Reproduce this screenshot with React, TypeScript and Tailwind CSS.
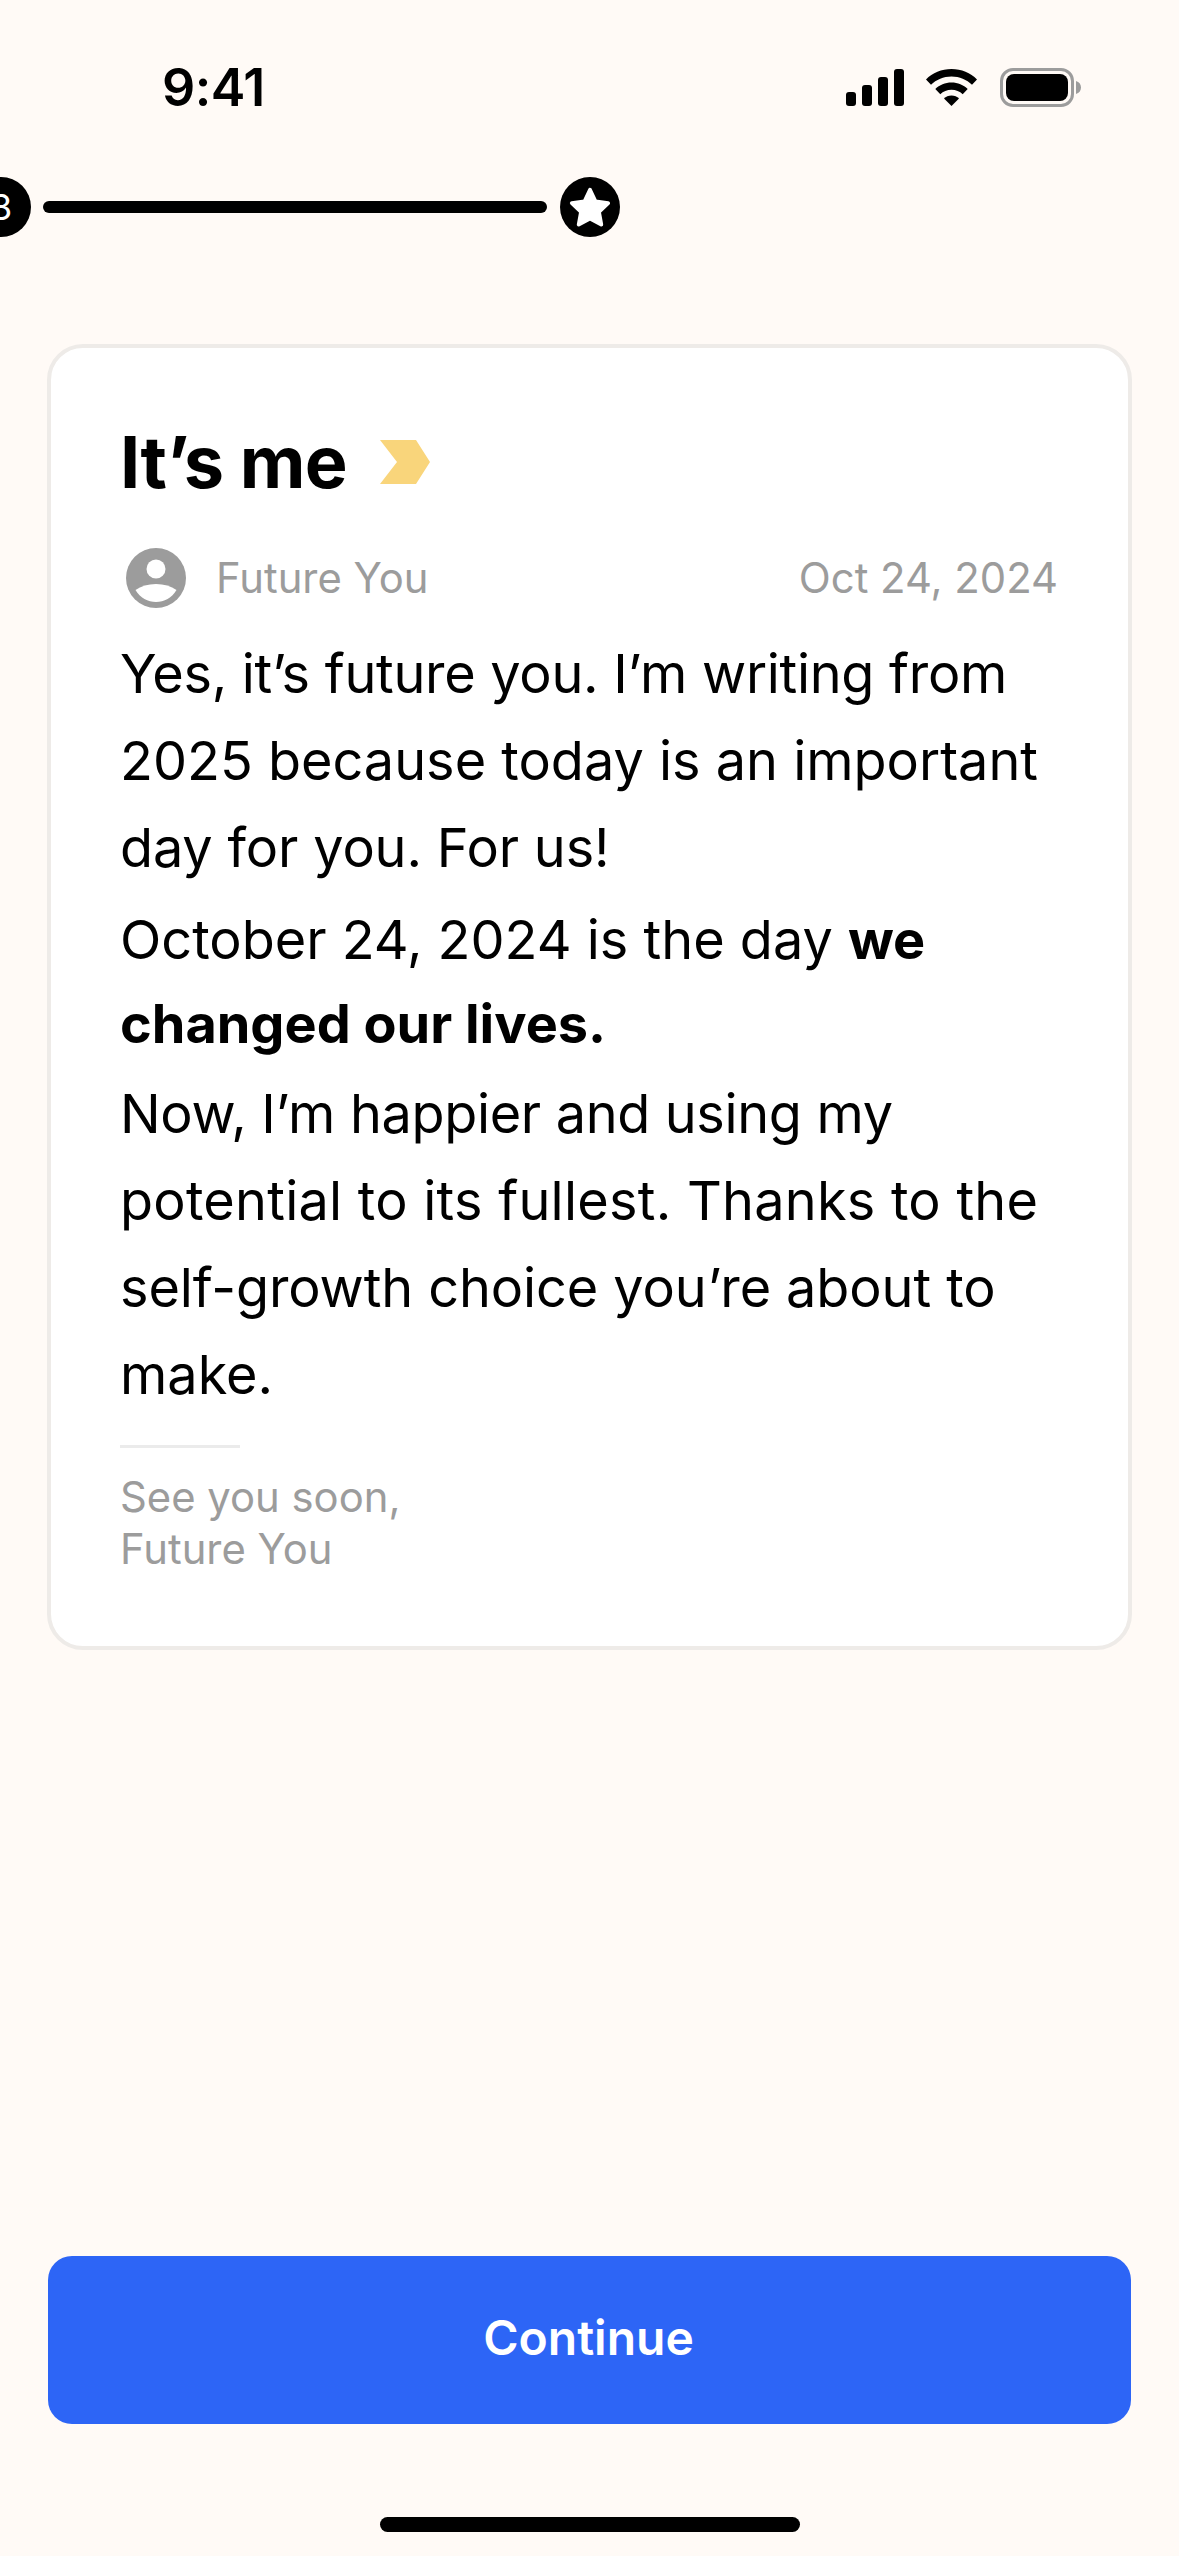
export default function App() {
  return (
    <div className="w-[1179px] h-[2556px] bg-[#fffaf6] overflow-hidden flex flex-col text-black" style={{ fontFamily: "Inter, 'Liberation Sans', sans-serif" }}>
      <div className="h-[177px] shrink-0 flex justify-between items-start pt-[61px] pl-[162px] pr-[98px]">
        <span className="text-[52px] leading-[54px] font-semibold tracking-[-0.5px]">9:41</span>
        <div className="flex items-start gap-[22px] pt-[8px]">
          <svg width="58" height="37" viewBox="0 0 58 37" fill="#000">
            <rect x="0" y="23" width="10" height="14" rx="3" />
            <rect x="16" y="16" width="10" height="21" rx="3" />
            <rect x="32" y="8" width="10" height="29" rx="3" />
            <rect x="48" y="0" width="10" height="37" rx="3" />
          </svg>
          <svg width="51" height="37" viewBox="0 0 51 37" fill="#000">
            <path d="M25.5 0C35.5 0 44.4 4 51 10.4L46 15.7C40.7 10.6 33.5 7.4 25.5 7.4S10.300 10.600 5 15.700L0 10.400C6.600 4 15.500 0 25.500 0Z" />
            <path d="M25.500 13.500C31.800 13.500 37.500 16 41.700 20L36.700 25.300C33.800 22.500 29.800 20.800 25.500 20.800S17.200 22.500 14.300 25.300L9.300 20C13.500 16 19.200 13.500 25.500 13.500Z" />
            <path d="M25.500 26.500C28.500 26.500 31.100 27.700 33 29.500L25.500 37L18 29.500C19.900 27.700 22.500 26.500 25.500 26.500Z" />
          </svg>
          <div className="flex items-center -mt-[1px] ml-[1px]">
            <div className="w-[74px] h-[39px] rounded-[13px] border-[3px] border-[#9c9c9c] p-[3px]">
              <div className="w-full h-full bg-black rounded-[8px]" />
            </div>
            <svg width="5" height="13" viewBox="0 0 5 13" className="ml-[2px]" fill="#9c9c9c">
              <path d="M0 0C3 1 5 3 5 6.500S3 12 0 13Z" />
            </svg>
          </div>
        </div>
      </div>

      <div className="flex items-center h-[60px] shrink-0 -ml-[29px]">
        <div className="w-[60px] h-[60px] rounded-full bg-black text-white flex items-center justify-center text-[36px] font-normal">3</div>
        <div className="w-[504px] h-[12px] rounded-full bg-black ml-[12px]" />
        <div className="w-[60px] h-[60px] rounded-full bg-black ml-[13px] flex items-center justify-center">
          <svg width="46" height="44" viewBox="0 0 24 23" fill="#fff" stroke="#fff" strokeWidth="2" strokeLinejoin="round">
            <path d="M12 2.500 L14.900 8.600 L21.500 9.500 L16.700 14.100 L17.900 20.700 L12 17.500 L6.100 20.700 L7.300 14.100 L2.500 9.500 L9.100 8.600 Z" />
          </svg>
        </div>
      </div>

      <div className="mx-[47px] mt-[107px] h-[1306px] rounded-[36px] border-[4px] border-[#eeebe8] bg-white pl-[69px] pr-[70px] pt-[61px]">
        <div className="flex items-center h-[106px]">
          <span className="text-[72px] leading-[106px] font-bold tracking-[-0.7px]">It’s me</span>
          <svg width="50" height="44" viewBox="0 0 50 44" className="ml-[33px]" fill="#f9d57b">
            <path d="M0 0H36L50 22L36 44H0L17 22Z" />
          </svg>
        </div>
        <div className="flex items-center justify-between mt-[33px] h-[60px] text-[#9c9c9c] text-[41.8px] leading-[60px]">
          <div className="flex items-center">
            <svg width="60" height="60" viewBox="0 0 60 60" className="ml-[6px]">
              <circle cx="30" cy="30" r="30" fill="#9c9c9c" />
              <circle cx="30" cy="21" r="9.500" fill="#fff" />
              <path d="M9.500 42C15 38 22 36 30 36S45 38 50.500 42C46 50 38 54 30 54S14 50 9.500 42Z" fill="#fff" />
            </svg>
            <span className="ml-[30px]">Future You</span>
          </div>
          <span>Oct 24, 2024</span>
        </div>
        <div className="mt-[22px] text-[54px] leading-[87px]">
          <p><span className="tracking-[-0.29px]">Yes, it’s future you. I’m writing from</span> 2025 because today is an important <span className="tracking-[-0.15px]">day for you. For us!</span></p>
          <p className="leading-[84px] mt-[7px]">October 24, 2024 is the day <b className="font-bold">we changed our lives.</b></p>
          <p className="mt-[4px]"><span className="tracking-[-0.34px]">Now, I’m happier and using my</span> <span className="tracking-[0.25px]">potential to its fullest. Thanks to the</span> <span className="tracking-[-0.09px]">self-growth choice you’re about to</span> make.</p>
        </div>
        <div className="w-[120px] h-[3px] bg-[#ebebeb] mt-[27px]" />
        <div className="mt-[23px] text-[41.8px] leading-[52px] text-[#9c9c9c]">
          <p>See you soon,</p>
          <p>Future You</p>
        </div>
      </div>

      <div className="flex-1" />
      <button className="mx-[48px] h-[168px] shrink-0 rounded-[24px] bg-[#2d65f6] text-white text-[48px] font-semibold pb-[4px] pr-[2px]">Continue</button>
      <div className="h-[132px] shrink-0 flex justify-center pt-[93px]">
        <div className="w-[420px] h-[15px] rounded-full bg-black" />
      </div>
    </div>
  );
}
